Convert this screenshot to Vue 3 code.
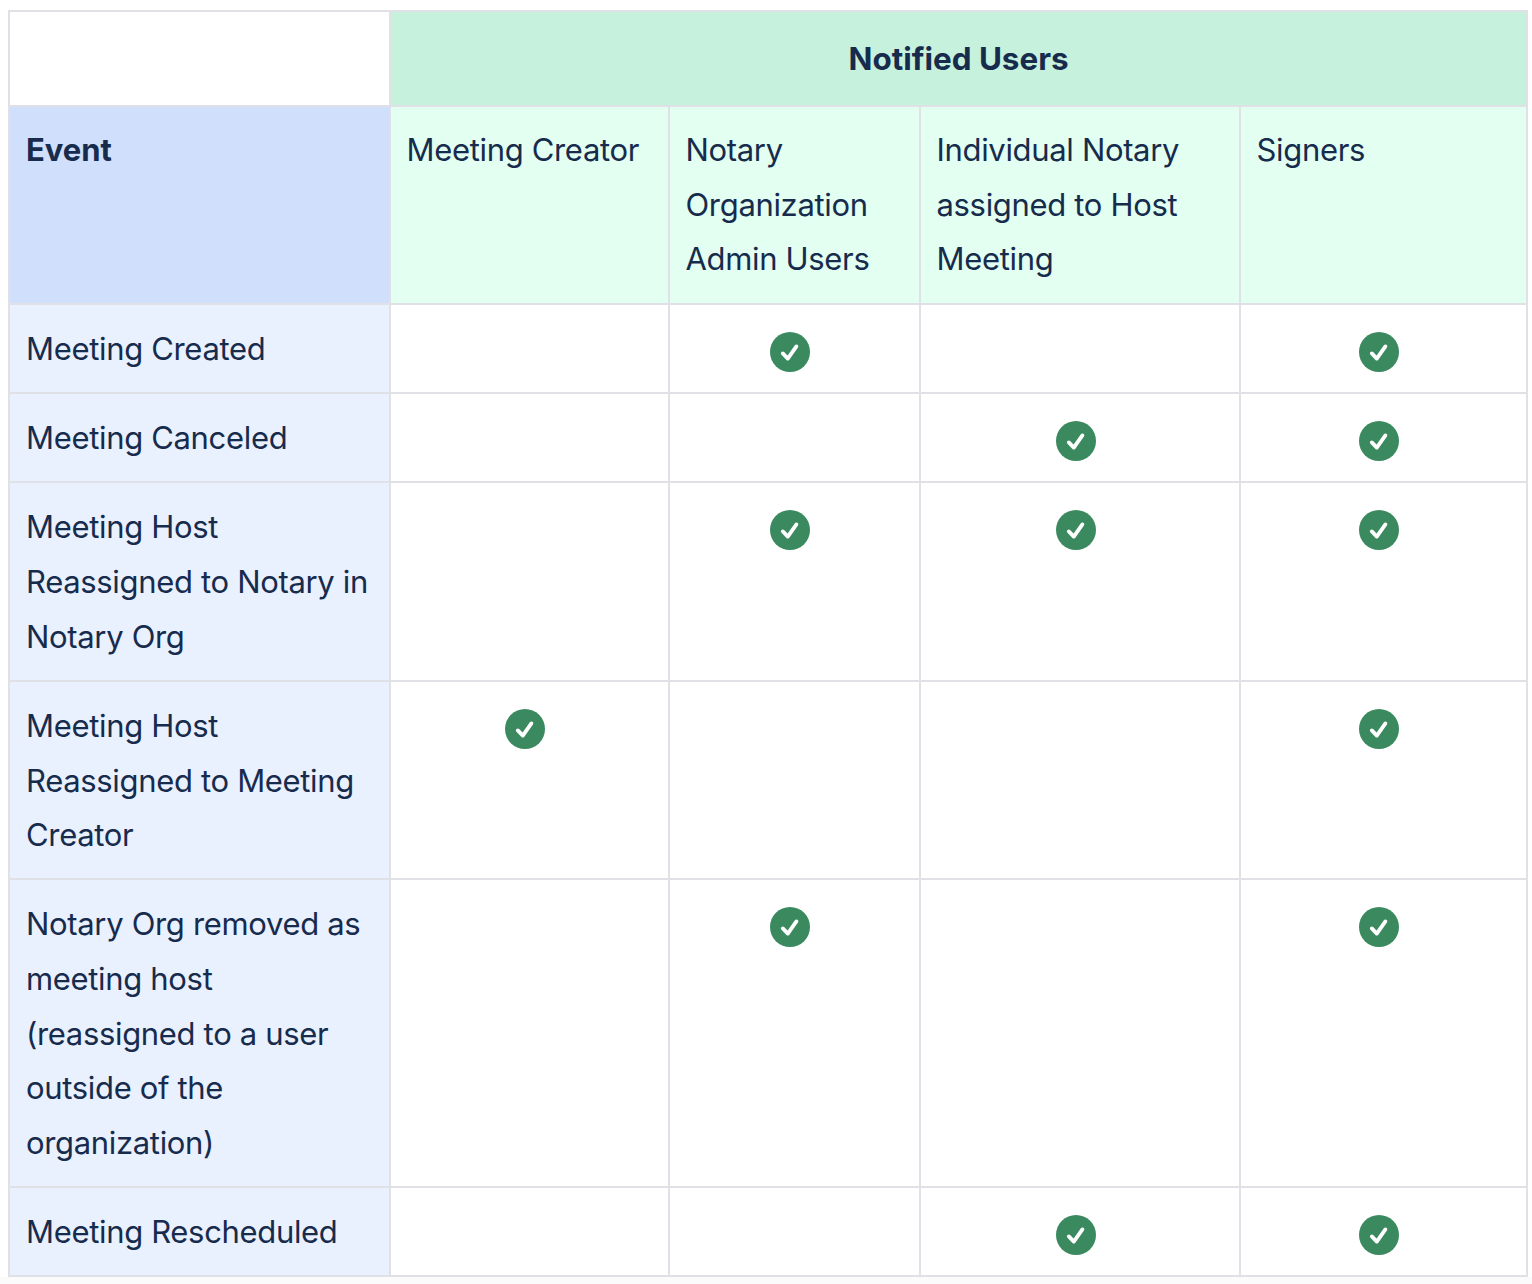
<script setup>
const rows = [
  { name: 'Meeting Created', checks: [false, true, false, true] },
  { name: 'Meeting Canceled', checks: [false, false, true, true] },
  { name: 'Meeting Host Reassigned to Notary in Notary Org', checks: [false, true, true, true] },
  { name: 'Meeting Host Reassigned to Meeting Creator', checks: [true, false, false, true] },
  { name: 'Notary Org removed as meeting host (reassigned to a user outside of the organization)', checks: [false, true, false, true] },
  { name: 'Meeting Rescheduled', checks: [false, false, true, true] },
]
const headers = ['Meeting Creator', 'Notary Organization Admin Users', 'Individual Notary assigned to Host Meeting', 'Signers']
</script>

<template>
  <div class="page">
    <table class="grid">
      <colgroup>
        <col class="c0" /><col class="c1" /><col class="c2" /><col class="c3" /><col class="c4" />
      </colgroup>
      <thead>
        <tr>
          <th class="blank"></th>
          <th class="notified" colspan="4">Notified Users</th>
        </tr>
        <tr>
          <th class="event">Event</th>
          <th v-for="h in headers" :key="h" class="role">{{ h }}</th>
        </tr>
      </thead>
      <tbody>
        <tr v-for="r in rows" :key="r.name">
          <td class="name">{{ r.name }}</td>
          <td v-for="(c, i) in r.checks" :key="i" class="mark">
            <svg v-if="c" class="check" viewBox="0 0 40 40" aria-hidden="true">
              <circle cx="20" cy="20" r="20" fill="#3b8a5f" />
              <path d="M12.8 21.4l5 5.2 8.6-12.2" fill="none" stroke="#fff" stroke-width="3.8" stroke-linecap="round" stroke-linejoin="round" />
            </svg>
          </td>
        </tr>
      </tbody>
    </table>
  </div>
</template>

<style>
body { background: #fbfbfb; }
</style>

<style scoped>
.page {
  padding: 10px 0 0 8px;
  background: #fff;
  font-family: Inter, "Liberation Sans", sans-serif;
  font-size: 31px;
  line-height: 54.7px;
  letter-spacing: -0.33px;
  color: #172b4d;
}
.grid {
  width: 1518px;
  table-layout: fixed;
  border-collapse: collapse;
}
.c0 { width: 381px; }
.c1 { width: 279px; }
.c2 { width: 251px; }
.c3 { width: 320px; }
.c4 { width: 287px; }
th, td {
  border: 2px solid #dfe1e6;
  padding: 16.4px 16px 16px;
  text-align: left;
  vertical-align: top;
  font-weight: 400;
}
td { padding-top: 17px; padding-bottom: 15.4px; }
.blank { background: #fff; }
.notified {
  background: #c6f1dc;
  text-align: center;
  font-weight: 700;
  font-size: 31.4px;
  letter-spacing: 0;
  padding-top: 19.6px;
  padding-bottom: 18.4px;
}
.event { background: #d0dffb; font-weight: 700; letter-spacing: 0; }
.role { background: #e2fff1; padding-left: 15.5px; }
.name { background: #e9f0fe; }
td.mark { text-align: center; padding-top: 16px; padding-bottom: 16.4px; }
.check {
  display: block;
  width: 40px;
  height: 40px;
  margin: 11px auto 0;
  position: relative;
  left: -4.5px;
}
</style>
